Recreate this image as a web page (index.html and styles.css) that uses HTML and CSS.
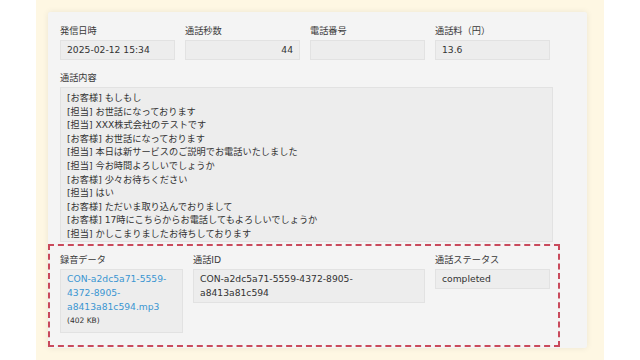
FILE: index.html
```html
<!DOCTYPE html>
<html lang="ja">
<head>
    <meta charset="UTF-8">
    <meta name="viewport" content="width=device-width, initial-scale=1.0">
    <title>通話詳細</title>
    <link rel="stylesheet" href="styles.css">
</head>
<body>
    <div class="page">
        <div class="card">
            <div class="row row-top">
                <div class="field">
                    <label>発信日時</label>
                    <div class="value">2025-02-12 15:34</div>
                </div>
                <div class="field">
                    <label>通話秒数</label>
                    <div class="value value-right">44</div>
                </div>
                <div class="field">
                    <label>電話番号</label>
                    <div class="value"></div>
                </div>
                <div class="field">
                    <label>通話料（円）</label>
                    <div class="value">13.6</div>
                </div>
            </div>

            <div class="field">
                <label>通話内容</label>
                <div class="transcript">[お客様] もしもし
[担当] お世話になっております
[担当] XXX株式会社のテストです
[お客様] お世話になっております
[担当] 本日は新サービスのご説明でお電話いたしました
[担当] 今お時間よろしいでしょうか
[お客様] 少々お待ちください
[担当] はい
[お客様] ただいま取り込んでおりまして
[お客様] 17時にこちらからお電話してもよろしいでしょうか
[担当] かしこまりましたお待ちしております</div>
            </div>

            <div class="highlight">
                <div class="row row-bottom">
                    <div class="field">
                        <label>録音データ</label>
                        <div class="value">
                            <a href="#" class="file-link">CON-a2dc5a71-5559-4372-8905-a8413a81c594.mp3</a>
                            <div class="file-size">(402 KB)</div>
                        </div>
                    </div>
                    <div class="field">
                        <label>通話ID</label>
                        <div class="value value-wrap">CON-a2dc5a71-5559-4372-8905-a8413a81c594</div>
                    </div>
                    <div class="field">
                        <label>通話ステータス</label>
                        <div class="value">completed</div>
                    </div>
                </div>
            </div>
        </div>
    </div>
</body>
</html>
```

FILE: styles.css
```css
body {
    margin: 0;
    padding: 0;
    background-color: #fff;
    font-family: "DejaVu Sans", "Noto Sans CJK JP", sans-serif;
    font-size: 9.2px;
    color: #333;
}

.page {
    margin: 0 36px;
    height: 360px;
    padding: 12px 17px 0 12px;
    box-sizing: border-box;
    background-color: #fef7e3;
}

.card {
    height: 336px;
    padding: 12px 12px 0 12px;
    box-sizing: border-box;
    background-color: #f4f4f4;
    border-radius: 2px;
    box-shadow: 0 0 6px rgba(0, 0, 0, 0.08);
}

.row {
    display: grid;
    column-gap: 10px;
    align-items: start;
}

.row-top {
    grid-template-columns: repeat(4, 115px);
    margin-bottom: 11px;
}

.row-bottom {
    grid-template-columns: 123px 232px 115px;
}

label {
    display: block;
    line-height: 13px;
    margin-bottom: 3px;
    color: #3a3a3a;
}

.value {
    min-height: 20px;
    padding: 2px 6px;
    line-height: 14px;
    background-color: #ededed;
    border: 1px solid #e2e2e2;
    box-sizing: border-box;
}

.value-right {
    text-align: right;
}

.value-wrap {
    padding-right: 12px;
}

.transcript {
    width: 493px;
    height: 155px;
    padding: 3px 6px;
    box-sizing: border-box;
    line-height: 13.6px;
    white-space: pre-line;
    background-color: #ededed;
    border: 1px solid #e2e2e2;
}

.highlight {
    margin: 2px 0 0 -12px;
    width: 512px;
    height: 103px;
    padding: 7px 0 0 10px;
    box-sizing: border-box;
    border: 2px dashed #c94a5c;
}

.file-link {
    color: #3b96d2;
    text-decoration: none;
}

.file-size {
    font-size: 7.5px;
    line-height: 14px;
    padding-bottom: 2px;
}
```
